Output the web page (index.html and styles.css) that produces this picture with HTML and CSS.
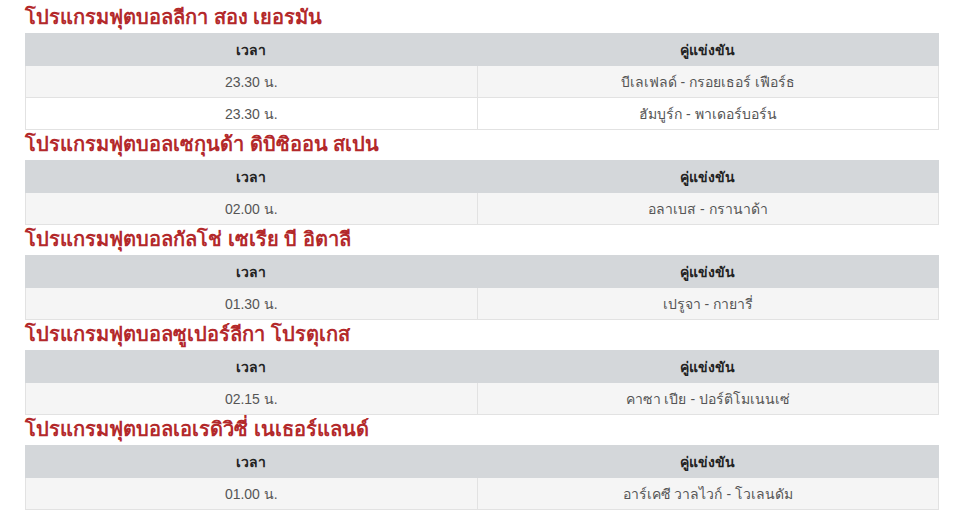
FILE: index.html
```html
<!DOCTYPE html>
<html lang="th">
<head>
<meta charset="utf-8">
<title>โปรแกรมฟุตบอล</title>
<link rel="stylesheet" href="styles.css">
</head>
<body>
<div class="page">
  <section class="league">
    <h2 class="league-title">โปรแกรมฟุตบอลลีกา สอง เยอรมัน</h2>
    <table class="fixtures">
      <thead><tr><th class="col-time">เวลา</th><th>คู่แข่งขัน</th></tr></thead>
      <tbody>
        <tr><td>23.30 น.</td><td>บีเลเฟลด์ - กรอยเธอร์ เฟือร์ธ</td></tr>
        <tr><td>23.30 น.</td><td>ฮัมบูร์ก - พาเดอร์บอร์น</td></tr>
      </tbody>
    </table>
  </section>
  <section class="league">
    <h2 class="league-title">โปรแกรมฟุตบอลเซกุนด้า ดิบิซิออน สเปน</h2>
    <table class="fixtures">
      <thead><tr><th class="col-time">เวลา</th><th>คู่แข่งขัน</th></tr></thead>
      <tbody>
        <tr><td>02.00 น.</td><td>อลาเบส - กรานาด้า</td></tr>
      </tbody>
    </table>
  </section>
  <section class="league">
    <h2 class="league-title">โปรแกรมฟุตบอลกัลโช่ เซเรีย บี อิตาลี</h2>
    <table class="fixtures">
      <thead><tr><th class="col-time">เวลา</th><th>คู่แข่งขัน</th></tr></thead>
      <tbody>
        <tr><td>01.30 น.</td><td>เปรูจา - กายารี่</td></tr>
      </tbody>
    </table>
  </section>
  <section class="league">
    <h2 class="league-title">โปรแกรมฟุตบอลซูเปอร์ลีกา โปรตุเกส</h2>
    <table class="fixtures">
      <thead><tr><th class="col-time">เวลา</th><th>คู่แข่งขัน</th></tr></thead>
      <tbody>
        <tr><td>02.15 น.</td><td>คาซา เปีย - ปอร์ติโมเนนเซ่</td></tr>
      </tbody>
    </table>
  </section>
  <section class="league">
    <h2 class="league-title">โปรแกรมฟุตบอลเอเรดิวิซี่ เนเธอร์แลนด์</h2>
    <table class="fixtures">
      <thead><tr><th class="col-time">เวลา</th><th>คู่แข่งขัน</th></tr></thead>
      <tbody>
        <tr><td>01.00 น.</td><td>อาร์เคซี วาลไวก์ - โวเลนดัม</td></tr>
      </tbody>
    </table>
  </section>
</div>
</body>
</html>
```
FILE: styles.css
```css
html, body {
  margin: 0;
  padding: 0;
  background: #ffffff;
}
body {
  font-family: "Liberation Sans", "Noto Sans", sans-serif;
  font-size: 14px;
  color: #555555;
}
.page {
  padding: 3px 21px 0 25px;
}
.league-title {
  margin: 2px 0 3px;
  font-size: 20px;
  line-height: 25px;
  font-weight: bold;
  color: #b3292b;
}
.fixtures {
  width: 100%;
  border-collapse: collapse;
  table-layout: fixed;
}
.fixtures .col-time {
  width: 47.6%;
}
.fixtures th,
.fixtures td {
  border: 1px solid #e2e2e2;
  padding: 8px 8px 7px;
  line-height: 16px;
  text-align: center;
  font-weight: normal;
}
.fixtures th {
  background: #d4d7da;
  color: #222222;
  font-weight: bold;
  border-color: #d4d7da;
}
.fixtures tbody tr:nth-child(odd) td {
  background: #f5f5f5;
}
.fixtures tbody tr:nth-child(even) td {
  background: #ffffff;
}
```
